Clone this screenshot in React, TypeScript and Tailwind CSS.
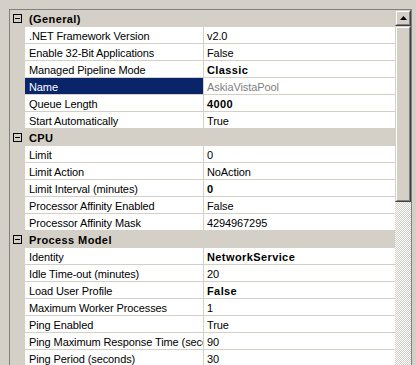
import React from "react";

type Row = { label: string; value: string; bold?: boolean; selected?: boolean; readonly?: boolean };
type Cat = { title: string; rows: Row[] };

const data: Cat[] = [
  {
    title: "(General)",
    rows: [
      { label: ".NET Framework Version", value: "v2.0" },
      { label: "Enable 32-Bit Applications", value: "False" },
      { label: "Managed Pipeline Mode", value: "Classic", bold: true },
      { label: "Name", value: "AskiaVistaPool", selected: true, readonly: true },
      { label: "Queue Length", value: "4000", bold: true },
      { label: "Start Automatically", value: "True" },
    ],
  },
  {
    title: "CPU",
    rows: [
      { label: "Limit", value: "0" },
      { label: "Limit Action", value: "NoAction" },
      { label: "Limit Interval (minutes)", value: "0", bold: true },
      { label: "Processor Affinity Enabled", value: "False" },
      { label: "Processor Affinity Mask", value: "4294967295" },
    ],
  },
  {
    title: "Process Model",
    rows: [
      { label: "Identity", value: "NetworkService", bold: true },
      { label: "Idle Time-out (minutes)", value: "20" },
      { label: "Load User Profile", value: "False", bold: true },
      { label: "Maximum Worker Processes", value: "1" },
      { label: "Ping Enabled", value: "True" },
      { label: "Ping Maximum Response Time (seconds)", value: "90" },
      { label: "Ping Period (seconds)", value: "30" },
    ],
  },
];

function Minus() {
  return (
    <div className="w-[9px] h-[9px] border border-[#000] flex items-center justify-center shrink-0">
      <div className="w-[5px] h-px bg-black" />
    </div>
  );
}

function Raised({ className, children }: { className?: string; children?: React.ReactNode }) {
  return (
    <div className={"border border-[#d4d0c8] border-r-[#404040] border-b-[#404040] bg-[#d4d0c8] " + (className ?? "")}>
      <div className="w-full h-full border border-white border-r-[#808080] border-b-[#808080] flex items-center justify-center">
        {children}
      </div>
    </div>
  );
}

export default function App() {
  return (
    <div
      className="w-[416px] h-[365px] overflow-hidden bg-[#d4d0c8] pt-[9px] pl-[9px] pr-[4px] text-[11px] text-black"
      style={{ fontFamily: '"Liberation Sans", Arial, sans-serif' }}
    >
      <div className="flex border-l border-t border-r border-[#808080] h-[400px]">
        <div className="w-[385px] flex flex-col">
          {data.map((cat) => (
            <React.Fragment key={cat.title}>
              <div className="h-[17px] flex items-center bg-[#d4d0c8] shrink-0">
                <div className="w-[19px] pl-[3px] flex items-center">
                  <Minus />
                </div>
                <span className="font-bold leading-[18px] tracking-[0.4px]">{cat.title}</span>
              </div>
              {cat.rows.map((r) => (
                <div key={r.label} className="h-[17px] flex pb-px bg-[#d4d0c8] shrink-0">
                  <div className="w-[15px]" />
                  <div
                    className={
                      "w-[178px] h-[16px] pl-[4px] leading-[18px] whitespace-nowrap overflow-hidden tracking-[-0.1px] " +
                      (r.selected ? "bg-[#0a246a] text-white" : "bg-white")
                    }
                  >
                    {r.label}
                  </div>
                  <div
                    className={
                      "ml-px flex-1 h-[16px] pl-[3px] leading-[18px] whitespace-nowrap overflow-hidden bg-white " +
                      (r.bold ? "font-bold tracking-[0.4px] " : "tracking-[-0.1px] ") +
                      (r.readonly ? "text-[#808080]" : "")
                    }
                  >
                    {r.value}
                  </div>
                </div>
              ))}
            </React.Fragment>
          ))}
        </div>
        <div className="w-[16px] flex flex-col">
          <Raised className="h-[16px] shrink-0">
            <svg width="7" height="4" viewBox="0 0 7 4">
              <path d="M3.5 0 L7 4 L0 4 Z" fill="#000" />
            </svg>
          </Raised>
          <Raised className="h-[176px] shrink-0" />
          <div className="flex-1 bg-[repeating-conic-gradient(#ffffff_0_25%,#d4d0c8_0_50%)] bg-[length:2px_2px]" />
        </div>
      </div>
    </div>
  );
}
